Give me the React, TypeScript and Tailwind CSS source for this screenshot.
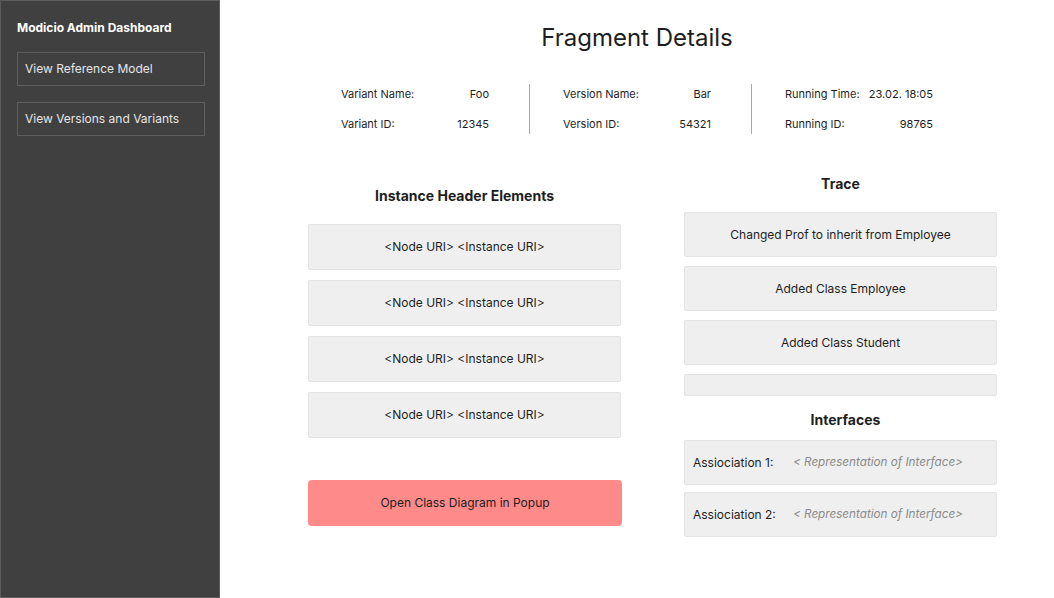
import * as React from "react";

const box = "flex items-center justify-center bg-[#efefef] border border-[#e3e3e3] rounded-[2px] text-[12px] text-[#1e1e1e]";

function InfoCol({ rows }: { rows: [string, string][] }) {
  return (
    <div className="w-[148px] flex flex-col gap-[16px] text-[11px] text-[#1e1e1e]">
      {rows.map(([k, v]) => (
        <div key={k} className="flex justify-between leading-[14px]">
          <span>{k}</span>
          <span>{v}</span>
        </div>
      ))}
    </div>
  );
}

function Divider() {
  return <div className="w-px h-[50px] bg-[#a8a8a8] ml-[40px] mr-[33px]" />;
}

export default function App() {
  return (
    <div className="flex w-[1054px] h-[598px] bg-white font-['Inter',sans-serif]">
      <aside className="w-[220px] shrink-0 bg-[#404040] border border-[#5c5c5c] px-[16px] pt-[19px]">
        <h1 className="text-[12px] font-bold text-white leading-[16px]">Modicio Admin Dashboard</h1>
        <div className="mt-[16px] flex flex-col gap-[16px]">
          {["View Reference Model", "View Versions and Variants"].map((t) => (
            <div
              key={t}
              className="h-[34px] w-[188px] border border-[#5e5e5e] flex items-center px-[7px] text-[12px] text-[#e6e6e6]"
            >
              {t}
            </div>
          ))}
        </div>
      </aside>

      <main className="flex-1 flex flex-col">
        <h2 className="text-center text-[24px] leading-[30px] text-[#1e1e1e] mt-[23px]">Fragment Details</h2>

        <div className="flex justify-center items-center mt-[31px]">
          <InfoCol rows={[["Variant Name:", "Foo"], ["Variant ID:", "12345"]]} />
          <Divider />
          <InfoCol rows={[["Version Name:", "Bar"], ["Version ID:", "54321"]]} />
          <Divider />
          <InfoCol rows={[["Running Time:", "23.02. 18:05"], ["Running ID:", "98765"]]} />
        </div>

        <div className="flex gap-[63px] pl-[88px] mt-[40px]">
          <section className="w-[313px] flex flex-col pt-[12px]">
            <h3 className="text-center text-[14px] font-bold leading-[20px] text-[#1e1e1e]">Instance Header Elements</h3>
            <div className="mt-[18px] flex flex-col gap-[10px]">
              {[0, 1, 2, 3].map((i) => (
                <div key={i} className={`${box} h-[46px]`}>
                  &lt;Node URI&gt; &lt;Instance URI&gt;
                </div>
              ))}
            </div>
            <button className="mt-[42px] h-[46px] w-[314px] rounded-[4px] bg-[#fe8a8a] text-[12px] text-[#1e1e1e]">
              Open Class Diagram in Popup
            </button>
          </section>

          <section className="w-[313px] flex flex-col">
            <h3 className="text-center text-[14px] font-bold leading-[20px] text-[#1e1e1e]">Trace</h3>
            <div className="mt-[18px] flex flex-col gap-[9px]">
              {["Changed Prof to inherit from Employee", "Added Class Employee", "Added Class Student"].map((t) => (
                <div key={t} className={`${box} h-[45px]`}>
                  {t}
                </div>
              ))}
              <div className={`${box} h-[22px]`} />
            </div>
            <h3 className="text-center text-[14px] font-bold leading-[20px] text-[#1e1e1e] mt-[14px] pl-[10px]">
              Interfaces
            </h3>
            <div className="mt-[10px] flex flex-col gap-[7px]">
              {["Assiociation 1:", "Assiociation 2:"].map((t) => (
                <div
                  key={t}
                  className="h-[45px] flex items-center bg-[#efefef] border border-[#e3e3e3] rounded-[2px] px-[8px] text-[12px]"
                >
                  <span className="w-[100px] text-[#1e1e1e]">{t}</span>
                  <span className="italic text-[11.7px] text-[#8a8a8a]">&lt; Representation of Interface&gt;</span>
                </div>
              ))}
            </div>
          </section>
        </div>
      </main>
    </div>
  );
}
